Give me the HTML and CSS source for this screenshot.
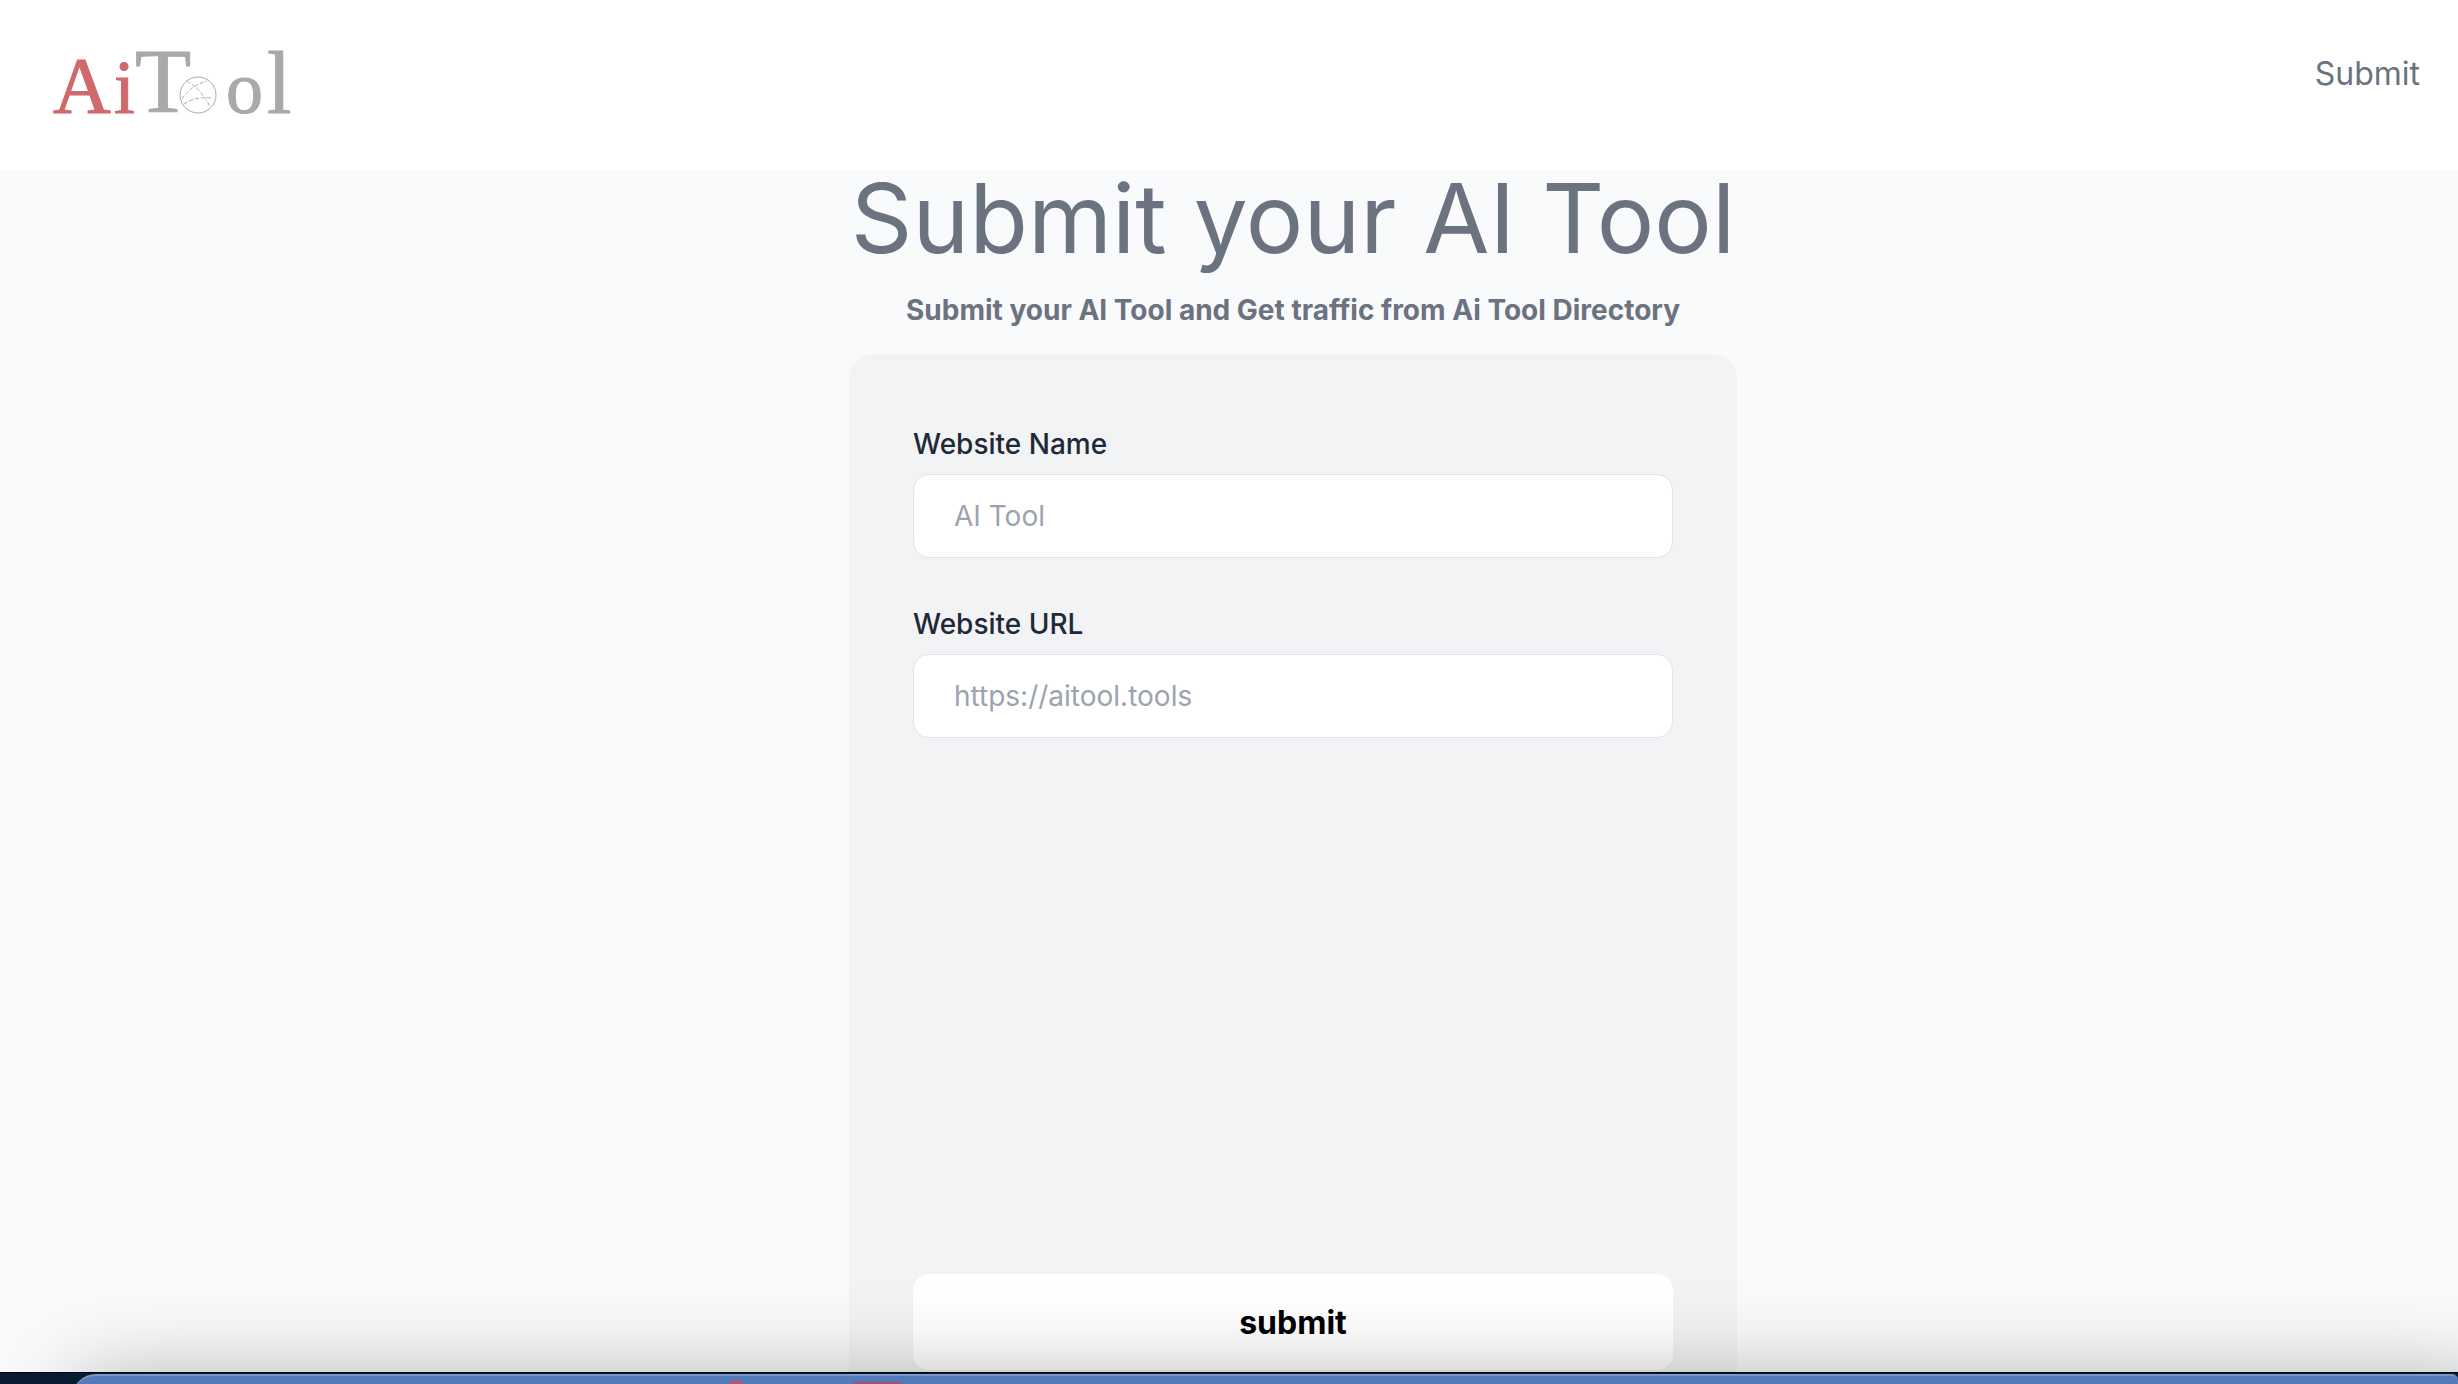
FILE: index.html
```html
<!DOCTYPE html>
<html lang="en">
<head>
    <meta charset="UTF-8">
    <meta name="viewport" content="width=device-width, initial-scale=1.0">
    <title>Submit your AI Tool</title>
    <link rel="stylesheet" href="styles.css">
</head>
<body>
    <header class="header">
        <a href="#" class="logo" aria-label="AiTool">
            <svg width="320" height="150" viewBox="0 0 320 150">
                <g class="logo-red">
                    <text x="53" y="113" font-size="80">A</text>
                    <text x="114" y="113" font-size="76">i</text>
                </g>
                <g class="logo-gray">
                    <text x="135" y="112" font-size="92">T</text>
                    <text x="226" y="113" font-size="74">o</text>
                    <text x="267" y="113" font-size="88">l</text>
                </g>
                <!-- Globe in place of the first "o" -->
                <circle class="globe" cx="198" cy="95" r="18" />
                <path class="globe-lines" d="M182 99 Q190 86 207 81 M184 104 Q196 96 213 98 M187 81 Q203 91 210 107" />
            </svg>
        </a>
        <nav>
            <a href="#" class="nav-link">Submit</a>
        </nav>
    </header>

    <main class="main">
        <h1>Submit your AI Tool</h1>
        <p class="subtitle">Submit your AI Tool and Get traffic from Ai Tool Directory</p>

        <!-- Submit Form -->
        <form class="submit-form">
            <div class="form-group">
                <label for="name">Website Name</label>
                <input type="text" id="name" name="name" placeholder="AI Tool">
            </div>
            <div class="form-group">
                <label for="url">Website URL</label>
                <input type="text" id="url" name="url" placeholder="https://aitool.tools">
            </div>
            <div class="preview"></div>
            <button type="submit">submit</button>
        </form>
    </main>

    <!-- Top edge of the dock -->
    <div class="dock-shadow"></div>
    <div class="dock">
        <div class="dock-panel">
            <span class="dock-dot"></span>
            <span class="dock-tab"></span>
        </div>
    </div>
</body>
</html>
```
FILE: styles.css
```css
* {
    box-sizing: border-box;
}

body {
    font-family: Inter, sans-serif;
    background-color: #f8fafc;
    color: #6b7280;
    margin: 0;
    height: 100vh;
    overflow: hidden;
}

.header {
    display: flex;
    justify-content: space-between;
    align-items: flex-start;
    height: 170px;
    padding-right: 38px;
    background: white;
}

.logo svg {
    display: block;
    font-family: "Liberation Serif", serif;
}

.logo-red {
    fill: #d0696b;
    stroke: #d0696b;
    stroke-width: 1;
}

.logo-gray {
    fill: #a9a9a9;
    stroke: #a9a9a9;
    stroke-width: 1;
}

.globe {
    fill: white;
    stroke: #aaa;
    stroke-width: 1;
}

.globe-lines {
    fill: none;
    stroke: #aaa;
    stroke-width: 1;
    stroke-dasharray: 4 2;
}

.nav-link {
    display: block;
    margin-top: 54px;
    font-size: 32px;
    line-height: 40px;
    color: #6b7280;
    text-decoration: none;
}

.main {
    display: flex;
    flex-direction: column;
    align-items: center;
    padding-left: 128px;
}

h1 {
    margin: 0;
    font-size: 96px;
    font-weight: 400;
    line-height: 96px;
}

.subtitle {
    margin: 24px 0;
    font-size: 28px;
    font-weight: 700;
    line-height: 40px;
}

.submit-form {
    width: 100%;
    max-width: 888px;
    padding: 70px 64px;
    background: #f1f3f5;
    border-radius: 24px;
}

.form-group {
    margin-bottom: 46px;
}

.form-group label {
    display: block;
    margin-bottom: 10px;
    font-size: 28px;
    font-weight: 500;
    line-height: 40px;
    color: #1f2937;
}

.form-group input {
    display: block;
    width: 100%;
    height: 84px;
    padding: 0 40px;
    font-family: inherit;
    font-size: 28px;
    background: white;
    border: 1px solid #e2e5e9;
    border-radius: 16px;
}

.form-group input::placeholder {
    color: #9ca3af;
}

.preview {
    height: 490px;
}

.submit-form button {
    display: block;
    width: 100%;
    height: 96px;
    font-family: inherit;
    font-size: 32px;
    font-weight: 700;
    color: black;
    background: white;
    border: none;
    border-radius: 16px;
    cursor: pointer;
}

.dock-shadow {
    position: fixed;
    left: 76px;
    right: -40px;
    bottom: -200px;
    height: 200px;
    border-radius: 24px;
    box-shadow: 0 0 90px rgba(0, 0, 0, 0.34);
    pointer-events: none;
}

.dock {
    position: fixed;
    left: 0;
    right: 0;
    bottom: 0;
    height: 12px;
    padding: 1px 0 0 72px;
    background: #091a33;
    border-top: 1px solid black;
    overflow: hidden;
}

.dock-panel {
    position: relative;
    height: 48px;
    background: #537bbc;
    border-top: 2px solid #7a96c4;
    border-radius: 24px 6px 0 0;
}

.dock-dot {
    position: absolute;
    left: 654px;
    top: 4px;
    width: 20px;
    height: 20px;
    background: #b8586a;
    border-radius: 50%;
}

.dock-tab {
    position: absolute;
    left: 778px;
    top: 6px;
    width: 54px;
    height: 20px;
    background: #a85078;
    border-radius: 6px;
}
```
